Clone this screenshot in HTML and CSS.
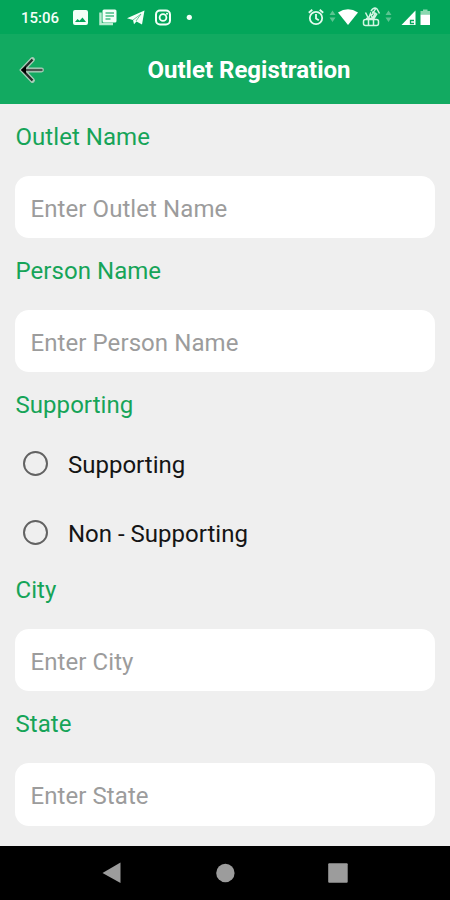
FILE: index.html
```html
<!DOCTYPE html>
<html lang="en">
<head>
<meta charset="utf-8">
<title>Outlet Registration</title>
<link rel="stylesheet" href="styles.css">
</head>
<body>
<div class="status">
  <span class="time">15:06</span>
  <svg class="icons-left" width="125" height="34" viewBox="70 0 125 34">
    <path fill="#f4fff8" fill-rule="evenodd" d="M75 10h11q2 0 2 2v11q0 2-2 2H75q-2 0-2-2V12q0-2 2-2zm0 12h11l-3.500-4.500-3 3.200-2-1.700z"/>
    <path fill="none" stroke="#b9ecd0" stroke-width="2.500" d="M100.500 12.500v11.500H113"/>
    <path fill="#f4fff8" d="M104 9.500h11q1.500 0 1.500 1.500v10q0 1.500-1.500 1.500h-11q-1.500 0-1.500-1.500V11q0-1.500 1.500-1.500z"/>
    <path stroke="#45bd84" stroke-width="1.300" d="M105.500 13h8.500M105.500 16h8.500M105.500 19h5"/>
    <path fill="#f4fff8" d="M127 18.300 144.500 10.500 142 24.500 136.500 21.500 134 24.300 133 20z"/>
    <path fill="none" stroke="#45bd84" stroke-width=".8" d="m133 20 8-6-5 7"/>
    <rect x="156" y="10.500" width="14" height="14" rx="4" fill="none" stroke="#f4fff8" stroke-width="2"/>
    <circle cx="163" cy="17.500" r="3.400" fill="none" stroke="#f4fff8" stroke-width="1.800"/>
    <circle cx="167" cy="13.700" r="1" fill="#f4fff8"/>
    <circle cx="189.300" cy="17.300" r="2.600" fill="#f4fff8"/>
  </svg>
  <svg class="icons-right" width="130" height="34" viewBox="305 0 130 34">
    <g fill="none" stroke="#e4faed" stroke-width="1.800">
      <circle cx="316" cy="18" r="6.200"/>
      <path d="m308.800 12.800 3.500-3M323.200 12.800l-3.500-3M316 14v4.500l2.800 1.800"/>
    </g>
    <path fill="#5cc491" d="m332.500 10.500 3 4.500h-6zm0 11.500 3-4.500h-6zM388.500 10.500l3 4.500h-6zm0 11.500 3-4.500h-6z"/>
    <path fill="#fff" d="M338 12.500q10-6.500 20 0L348 25z"/>
    <g fill="none" stroke="#d3f5e2" stroke-width="1.500">
      <rect x="363.500" y="19.500" width="15" height="6" rx="2"/>
      <path d="M368.500 20v5M373.500 20v5M365.500 12.500l3 6 2-5 2 5 2.500-5M371 11q3-4.500 6-2l2.500 4.500M372 12l4 1.500M376 8l-4 7M366 18.500h8l3-5"/>
    </g>
    <path fill="#fff" d="M401.500 25 415.500 10.500V25z"/>
    <path fill="none" stroke="#03a65a" stroke-width="1.300" d="M414 20.500h-3.500v3h3.500"/>
    <path fill="#8ad8af" d="M423 9.500h4.500v1.500h2.500v3.500h-9.500V11h2.500z"/>
    <path fill="#fff" d="M420.500 14.500h9.500V25h-9.500z"/>
  </svg>
</div>
<header class="header">
  <svg class="back" width="26" height="30" viewBox="19 55 26 30">
    <g fill="none" stroke-linejoin="miter">
      <path stroke="#a9cdb9" stroke-width="4.800" stroke-linecap="round" d="M32.500 59.500 22.500 70 32.500 80.500M23 70h18.500"/>
      <path stroke="#4c5650" stroke-width="2.200" d="M24 70h18.500"/>
      <path stroke="#262b28" stroke-width="2.300" d="M32.500 59.500 22.500 70 32.500 80.500"/>
      <path fill="#000" d="m21 70 5-4v8z"/>
    </g>
  </svg>
  <h1 class="title">Outlet Registration</h1>
</header>
<main class="form">
  <div class="field"><label class="label" for="outlet">Outlet Name</label><input class="input" id="outlet" placeholder="Enter Outlet Name"></div>
  <div class="field"><label class="label" for="person">Person Name</label><input class="input" id="person" placeholder="Enter Person Name"></div>
  <div class="field group">
    <span class="label">Supporting</span>
    <label class="option"><input class="radio" type="radio" name="support"><span>Supporting</span></label>
    <label class="option"><input class="radio" type="radio" name="support"><span>Non - Supporting</span></label>
  </div>
  <div class="field"><label class="label" for="city">City</label><input class="input" id="city" placeholder="Enter City"></div>
  <div class="field"><label class="label" for="state">State</label><input class="input" id="state" placeholder="Enter State"></div>
</main>
<nav class="nav">
  <svg width="450" height="54" viewBox="0 846 450 54" fill="#9c9c9c">
    <path d="M102.500 873 120.500 862.500V883z"/>
    <circle cx="225.400" cy="873" r="9.200"/>
    <rect x="328.200" y="863.300" width="19.500" height="19.400" rx="1"/>
  </svg>
</nav>
</body>
</html>
```
FILE: styles.css
```css
* { box-sizing: border-box; }
body {
  margin: 0;
  width: 450px;
  height: 900px;
  overflow: hidden;
  display: flex;
  flex-direction: column;
  background: #efefef;
  font-family: Roboto, sans-serif;
  font-size: 24px;
}
svg { display: block; flex: none; }
.status {
  height: 34px;
  flex: none;
  display: flex;
  background: #03a65a;
  color: #f4fff8;
}
.time {
  width: 70px;
  padding-left: 21px;
  font-size: 15px;
  font-weight: 500;
  line-height: 36px;
}
.icons-right { margin-left: auto; margin-right: 15px; }
.header {
  height: 70px;
  flex: none;
  display: flex;
  align-items: center;
  padding: 2px 0 0 19px;
  background: #12aa61;
}
.title {
  margin: 1px 0 0 102.500px;
  color: #fff;
  font-size: 24px;
  font-weight: 700;
  line-height: 31px;
  white-space: nowrap;
}
.form {
  height: 742px;
  flex: none;
  padding: 0 15px;
}
.field {
  display: flex;
  flex-direction: column;
  height: 134.200px;
  padding-top: 18px;
}
.group { height: 184.800px; }
.label {
  height: 30px;
  margin-bottom: 24px;
  padding-left: 0.500px;
  color: #16a458;
  line-height: 30px;
  letter-spacing: 0.050px;
}
.input {
  width: 420px;
  height: 62.400px;
  padding: 3px 15px 0 15.500px;
  border: 0;
  border-radius: 14px;
  background: #fff;
  font: inherit;
  letter-spacing: 0.080px;
}
.input::placeholder { color: #9c9c9c; opacity: 1; }
.option {
  display: flex;
  align-items: center;
  height: 26px;
  margin: 0 0 43px 8px;
  color: #151515;
}
.group .label { margin-bottom: 30px; }
.option span { padding-top: 3px; line-height: 26px; }
.radio {
  appearance: none;
  width: 25px;
  height: 25px;
  margin: 0 20px 0 0;
  border: 2px solid #626262;
  border-radius: 50%;
}
.nav { height: 54px; flex: none; background: #000; }
```
